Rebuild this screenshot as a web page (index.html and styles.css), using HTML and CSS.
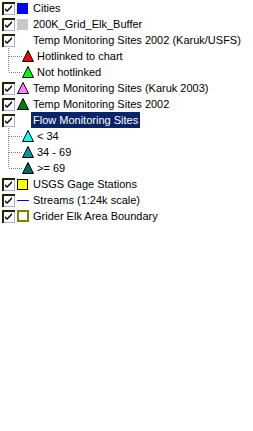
FILE: index.html
```html
<!DOCTYPE html>
<html>
  <head>
    <title>legend</title>
    <link rel="stylesheet" href="styles.css">
  </head>
  <body>
    <div class="legend">
      <div class="row">
        <svg class="check" width="13" height="13"><rect x="0.5" y="0.5" width="12" height="12" fill="#fff" stroke="#a8a8f0"/><path d="M0.5 12.5V0.5H12.5" fill="none" stroke="#202010" stroke-width="2" transform="translate(0.5 0.5)"/><path d="M3 6l2 2 5-5v2l-5 5-2-2z" fill="#000"/></svg>
        <svg class="icon" width="12" height="12"><rect x="0" y="1" width="11" height="11" fill="#0000ff"/></svg>
        <span class="label">Cities</span>
      </div>
      <div class="row">
        <svg class="check" width="13" height="13"><rect x="0.5" y="0.5" width="12" height="12" fill="#fff" stroke="#a8a8f0"/><path d="M0.5 12.5V0.5H12.5" fill="none" stroke="#202010" stroke-width="2" transform="translate(0.5 0.5)"/><path d="M3 6l2 2 5-5v2l-5 5-2-2z" fill="#000"/></svg>
        <svg class="icon" width="12" height="12"><rect x="0" y="1" width="11" height="11" fill="#c8c8c8"/></svg>
        <span class="label">200K_Grid_Elk_Buffer</span>
      </div>
      <div class="row">
        <svg class="check" width="13" height="13"><rect x="0.5" y="0.5" width="12" height="12" fill="#fff" stroke="#a8a8f0"/><path d="M0.5 12.5V0.5H12.5" fill="none" stroke="#202010" stroke-width="2" transform="translate(0.5 0.5)"/><path d="M3 6l2 2 5-5v2l-5 5-2-2z" fill="#000"/></svg>
        <span class="icon"></span>
        <span class="label">Temp Monitoring Sites 2002 (Karuk/USFS)</span>
      </div>
      <div class="row sub">
        <svg class="tree" width="20" height="16"><path d="M6.5 0V16M7 8.5H20" stroke="#808080" stroke-dasharray="1 1"/></svg>
        <svg class="tri" width="12" height="12"><path d="M6 0.5L11.5 11.5H0.5z" fill="#ff0000" stroke="#000"/></svg>
        <span class="label">Hotlinked to chart</span>
      </div>
      <div class="row sub">
        <svg class="tree" width="20" height="16"><path d="M6.5 0V8M7 8.5H20" stroke="#808080" stroke-dasharray="1 1"/></svg>
        <svg class="tri" width="12" height="12"><path d="M6 0.5L11.5 11.5H0.5z" fill="#00ff00" stroke="#000"/></svg>
        <span class="label">Not hotlinked</span>
      </div>
      <div class="row">
        <svg class="check" width="13" height="13"><rect x="0.5" y="0.5" width="12" height="12" fill="#fff" stroke="#a8a8f0"/><path d="M0.5 12.5V0.5H12.5" fill="none" stroke="#202010" stroke-width="2" transform="translate(0.5 0.5)"/><path d="M3 6l2 2 5-5v2l-5 5-2-2z" fill="#000"/></svg>
        <svg class="icon" width="12" height="12"><path d="M6 0.5L11.5 11.5H0.5z" fill="#ff80ff" stroke="#000"/></svg>
        <span class="label">Temp Monitoring Sites (Karuk 2003)</span>
      </div>
      <div class="row">
        <svg class="check" width="13" height="13"><rect x="0.5" y="0.5" width="12" height="12" fill="#fff" stroke="#a8a8f0"/><path d="M0.5 12.5V0.5H12.5" fill="none" stroke="#202010" stroke-width="2" transform="translate(0.5 0.5)"/><path d="M3 6l2 2 5-5v2l-5 5-2-2z" fill="#000"/></svg>
        <svg class="icon" width="12" height="12"><path d="M6 0.5L11.5 11.5H0.5z" fill="#008000" stroke="#000"/></svg>
        <span class="label">Temp Monitoring Sites 2002</span>
      </div>
      <div class="row">
        <svg class="check" width="13" height="13"><rect x="0.5" y="0.5" width="12" height="12" fill="#fff" stroke="#a8a8f0"/><path d="M0.5 12.5V0.5H12.5" fill="none" stroke="#202010" stroke-width="2" transform="translate(0.5 0.5)"/><path d="M3 6l2 2 5-5v2l-5 5-2-2z" fill="#000"/></svg>
        <span class="icon"></span>
        <span class="label selected">Flow Monitoring Sites</span>
      </div>
      <div class="row sub">
        <svg class="tree" width="20" height="16"><path d="M6.5 0V16M7 8.5H20" stroke="#808080" stroke-dasharray="1 1"/></svg>
        <svg class="tri" width="12" height="12"><path d="M6 0.5L11.5 11.5H0.5z" fill="#00ffff" stroke="#000"/></svg>
        <span class="label">&lt; 34</span>
      </div>
      <div class="row sub">
        <svg class="tree" width="20" height="16"><path d="M6.5 0V16M7 8.5H20" stroke="#808080" stroke-dasharray="1 1"/></svg>
        <svg class="tri" width="12" height="12"><path d="M6 0.5L11.5 11.5H0.5z" fill="#009999" stroke="#000"/></svg>
        <span class="label">34 - 69</span>
      </div>
      <div class="row sub">
        <svg class="tree" width="20" height="16"><path d="M6.5 0V8M7 8.5H20" stroke="#808080" stroke-dasharray="1 1"/></svg>
        <svg class="tri" width="12" height="12"><path d="M6 0.5L11.5 11.5H0.5z" fill="#006666" stroke="#000"/></svg>
        <span class="label">&gt;= 69</span>
      </div>
      <div class="row">
        <svg class="check" width="13" height="13"><rect x="0.5" y="0.5" width="12" height="12" fill="#fff" stroke="#a8a8f0"/><path d="M0.5 12.5V0.5H12.5" fill="none" stroke="#202010" stroke-width="2" transform="translate(0.5 0.5)"/><path d="M3 6l2 2 5-5v2l-5 5-2-2z" fill="#000"/></svg>
        <svg class="icon" width="12" height="12"><rect x="0.5" y="1.5" width="10" height="10" fill="#ffff00" stroke="#000"/></svg>
        <span class="label">USGS Gage Stations</span>
      </div>
      <div class="row">
        <svg class="check" width="13" height="13"><rect x="0.5" y="0.5" width="12" height="12" fill="#fff" stroke="#a8a8f0"/><path d="M0.5 12.5V0.5H12.5" fill="none" stroke="#202010" stroke-width="2" transform="translate(0.5 0.5)"/><path d="M3 6l2 2 5-5v2l-5 5-2-2z" fill="#000"/></svg>
        <svg class="icon" width="12" height="12"><path d="M0 6.5H12" stroke="#0000ff"/></svg>
        <span class="label">Streams (1:24k scale)</span>
      </div>
      <div class="row">
        <svg class="check" width="13" height="13"><rect x="0.5" y="0.5" width="12" height="12" fill="#fff" stroke="#a8a8f0"/><path d="M0.5 12.5V0.5H12.5" fill="none" stroke="#202010" stroke-width="2" transform="translate(0.5 0.5)"/><path d="M3 6l2 2 5-5v2l-5 5-2-2z" fill="#000"/></svg>
        <svg class="icon" width="12" height="12"><rect x="1" y="1" width="10" height="10" fill="#fff" stroke="#808000" stroke-width="2"/></svg>
        <span class="label">Grider Elk Area Boundary</span>
      </div>
    </div>
  </body>
</html>
```

FILE: styles.css
```css
body, html {
  margin: 0;
  background-color: #fff;
}

body {
  font-family: "Liberation Sans", Arial, sans-serif;
  font-size: 11px;
  color: #000;
}

.legend {
  display: flex;
  flex-direction: column;
  padding-left: 2px;
}

.row {
  display: flex;
  align-items: center;
  height: 16px;
}

.check {
  flex: none;
  margin-right: 2px;
}

.icon {
  flex: none;
  width: 12px;
  height: 12px;
  margin-right: 2px;
}

.tree {
  flex: none;
}

.tri {
  flex: none;
  margin-right: 3px;
}

.sub .label {
  padding-left: 0;
}

.label {
  white-space: nowrap;
  padding: 1px 2px;
  line-height: 14px;
}

.selected {
  background-color: #0a246a;
  color: #fff;
}
```
